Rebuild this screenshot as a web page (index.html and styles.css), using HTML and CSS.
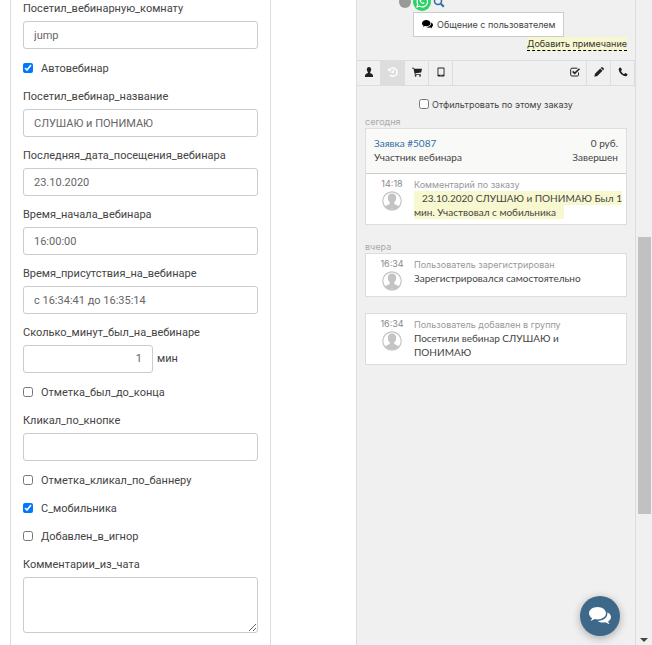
FILE: index.html
```
<!DOCTYPE html>
<html lang="ru">
<head>
    <meta charset="UTF-8">
    <title>Заявка #5087</title>
    <link rel="stylesheet" href="styles.css">
</head>
<body>
    <main class="content">
        <form class="fields">
            <label class="title" for="room">Посетил_вебинарную_комнату</label>
            <input class="text" type="text" id="room" value="jump">

            <label class="check"><input type="checkbox" checked>Автовебинар</label>

            <label class="title" for="webinar">Посетил_вебинар_название</label>
            <input class="text" type="text" id="webinar" value="СЛУШАЮ и ПОНИМАЮ">

            <label class="title" for="date">Последняя_дата_посещения_вебинара</label>
            <input class="text" type="text" id="date" value="23.10.2020">

            <label class="title" for="start">Время_начала_вебинара</label>
            <input class="text" type="text" id="start" value="16:00:00">

            <label class="title" for="presence">Время_присутствия_на_вебинаре</label>
            <input class="text" type="text" id="presence" value="с 16:34:41 до 16:35:14">

            <label class="title" for="minutes">Сколько_минут_был_на_вебинаре</label>
            <div class="minutes">
                <input class="text number" type="text" id="minutes" value="1">
                <span>мин</span>
            </div>

            <label class="check"><input type="checkbox">Отметка_был_до_конца</label>

            <label class="title" for="button">Кликал_по_кнопке</label>
            <input class="text" type="text" id="button">

            <label class="check"><input type="checkbox">Отметка_кликал_по_баннеру</label>
            <label class="check"><input type="checkbox" checked>С_мобильника</label>
            <label class="check"><input type="checkbox">Добавлен_в_игнор</label>

            <label class="title" for="comments">Комментарии_из_чата</label>
            <textarea class="text area" id="comments"></textarea>
        </form>
    </main>

    <!-- общие иконки -->
    <svg class="sprite" width="0" height="0">
        <symbol id="comments-icon" viewBox="0 0 22 18">
            <path d="M8.500 0C3.800 0 0 2.800 0 6.300c0 2 1.200 3.700 3.100 4.900-.3 1-.9 1.800-1.700 2.500 1.700-.1 3.200-.7 4.400-1.600.9.2 1.800.3 2.700.3 4.700 0 8.500-2.700 8.500-6.100S13.200 0 8.500 0z"/>
            <path d="M18.300 5.200c.1.400.1.800.1 1.200 0 4.100-4.300 7.400-9.700 7.500 1.400 1 3.300 1.600 5.400 1.600.8 0 1.600-.1 2.300-.3 1.200.9 2.600 1.500 4.200 1.600-.7-.7-1.200-1.400-1.500-2.300 1.800-1.100 2.900-2.700 2.900-4.500 0-1.900-1.400-3.700-3.700-4.800z"/>
        </symbol>
        <symbol id="avatar-icon" viewBox="0 0 20 20">
            <circle cx="10" cy="10" r="9.200" fill="#fff" stroke="#c4c4c4" stroke-width="1.200"/>
            <path fill="#c4c4c4" d="M10 2.500c-2.800 0-4.200 1.700-4.200 4.200 0 2 .8 3.500 1.900 4.500v1.500c0 .9-3.400 1.200-4.700 2.700C4.700 17.600 7 18.700 10 18.700s5.300-1.100 7-3.300c-1.300-1.500-4.700-1.800-4.700-2.700v-1.500c1.100-1 1.900-2.500 1.900-4.500 0-2.500-1.400-4.200-4.200-4.200z"/>
        </symbol>
    </svg>

    <aside class="panel">
        <div class="contacts">
            <span class="dot"></span>
            <svg class="whatsapp" width="18" height="18" viewBox="0 0 18 18">
                <circle cx="9" cy="9" r="9" fill="#2bd366"/>
                <path d="M4 14l.8-2.800A5.200 5.200 0 1 1 6.800 13.200z" fill="none" stroke="#fff" stroke-width="1.200"/>
                <path d="M7 6.200c-.9.900-.3 2.300.9 3.500s2.700 1.800 3.500.9l.2-.7-1.400-.7-.7.600c-.8-.3-1.400-.9-1.700-1.700l.6-.7-.7-1.400z" fill="#fff"/>
            </svg>
            <svg class="search" width="12" height="12" viewBox="0 0 12 12" fill="none" stroke="#2e6da4">
                <circle cx="5" cy="5" r="3.500" stroke-width="1.500"/>
                <path d="M7.800 7.800l3 3" stroke-width="2"/>
            </svg>
        </div>
        <button class="talk" type="button">
            <svg width="11" height="9"><use href="#comments-icon"/></svg>
            Общение с пользователем
        </button>
        <div class="note"><a href="#">Добавить примечание</a></div>

        <div class="toolbar">
            <button type="button" aria-label="Пользователь">
                <svg width="10" height="10" viewBox="0 0 10 10"><path d="M5 0C3.600 0 2.800 1 2.800 2.500c0 1.100.4 2 1.100 2.600v.7C3.600 6.400 1 6.700 1 8.600V10h8V8.600c0-1.900-2.600-2.200-2.900-2.800v-.7c.7-.6 1.100-1.500 1.100-2.600C7.200 1 6.400 0 5 0z"/></svg>
            </button>
            <button class="active" type="button" aria-label="История">
                <svg width="10" height="10" viewBox="0 0 10 10" fill="none" stroke="#fff" stroke-width="1.400"><path d="M1.500 3A4.100 4.100 0 1 1 2 7.900M5.200 2.700v2.700H3.300"/><path d="M.2.800v3.500h3.500z" fill="#fff" stroke="none"/></svg>
            </button>
            <button type="button" aria-label="Корзина">
                <svg width="10" height="10" viewBox="0 0 10 10"><path d="M0 .7h2l.4 1H10L9.200 5.600 3.500 6.300l.1.600h5.200v.8H2.800L1.500 1.600H0z"/><circle cx="3.600" cy="8.800" r=".9"/><circle cx="8" cy="8.800" r=".9"/></svg>
            </button>
            <button type="button" aria-label="Планшет">
                <svg width="10" height="10" viewBox="0 0 10 10"><path fill-rule="evenodd" d="M2.300.5h5.400q.8 0 .8.800v7.400q0 .8-.8.800H2.300q-.8 0-.8-.8V1.300q0-.8.800-.8zM2.400 1.400v6.300h5.200V1.400zM4.600 8.200v.7h.8v-.7z"/></svg>
            </button>
            <span class="space"></span>
            <button type="button" aria-label="Задача">
                <svg width="10" height="10" viewBox="0 0 10 10" fill="none" stroke="#222"><path d="M8.500 5.500v2.400q0 1.100-1.100 1.100H1.900Q.7 9 .7 7.900V2.400q0-1.200 1.200-1.200h5.400"/><path d="M2.700 4.400l2 2 4.800-4.700" stroke-width="1.600"/></svg>
            </button>
            <button type="button" aria-label="Изменить">
                <svg width="10" height="10" viewBox="0 0 10 10"><path d="M.3 9.700l.7-3L6.200 1.500l2.300 2.300L3.300 9zM6.800.9l.7-.7q.5-.4 1 0l1.300 1.300q.4.500 0 1l-.7.700z"/></svg>
            </button>
            <button type="button" aria-label="Позвонить">
                <svg width="10" height="10" viewBox="0 0 10 10"><path d="M2.300.5L.9 1.300C.2 3.200 1.500 5.500 3 7s3.800 2.800 5.700 2.100l.8-1.400-.2-.6-2-1.100-1.200 1C5 6.600 3.600 5.200 3 3.900l1-1.200-1.100-2z"/></svg>
            </button>
        </div>

        <label class="filter"><input type="checkbox">Отфильтровать по этому заказу</label>

        <h2 class="day">сегодня</h2>
        <section class="card">
            <header class="order">
                <a href="#">Заявка #5087</a><span>0 руб.</span>
                <span>Участник вебинара</span><span>Завершен</span>
            </header>
            <div class="event">
                <div class="who">
                    <time>14:18</time>
                    <svg width="20" height="20"><use href="#avatar-icon"/></svg>
                </div>
                <div class="what">
                    <h3>Комментарий по заказу</h3>
                    <p><mark>23.10.2020 СЛУШАЮ и ПОНИМАЮ Был 1<br>мин. Участвовал с мобильника</mark></p>
                </div>
            </div>
        </section>

        <h2 class="day">вчера</h2>
        <section class="card">
            <div class="event">
                <div class="who">
                    <time>16:34</time>
                    <svg width="20" height="20"><use href="#avatar-icon"/></svg>
                </div>
                <div class="what">
                    <h3>Пользователь зарегистрирован</h3>
                    <p>Зарегистрировался самостоятельно</p>
                </div>
            </div>
        </section>
        <section class="card">
            <div class="event">
                <div class="who">
                    <time>16:34</time>
                    <svg width="20" height="20"><use href="#avatar-icon"/></svg>
                </div>
                <div class="what">
                    <h3>Пользователь добавлен в группу</h3>
                    <p>Посетили вебинар СЛУШАЮ и<br>ПОНИМАЮ</p>
                </div>
            </div>
        </section>
    </aside>

    <div class="scroll">
        <span class="thumb"></span>
        <span class="down"></span>
    </div>

    <button class="chat" type="button" aria-label="Чат">
        <svg width="22" height="18"><use href="#comments-icon"/></svg>
    </button>
</body>
</html>
```
FILE: styles.css
```
*{
    box-sizing: border-box;
    margin: 0;
    padding: 0;
}

body{
    display: flex;
    height: 100vh;
    overflow: hidden;
    background: #fff;
    color: #444;
    font-family: Roboto, "Liberation Sans", sans-serif;
    font-size: 11px;
}

button, input, textarea{
    font: inherit;
    color: inherit;
}

a{
    color: #2e6da4;
    text-decoration: none;
}

.sprite{
    position: absolute;
}

/* левая часть: поля */

.content{
    flex: 1;
    padding: 0 85px 0 10px;
}

.fields{
    display: flex;
    flex-direction: column;
    min-height: 100%;
    padding: 0 12px;
    border: solid #ddd;
    border-width: 0 1px;
}

.title{
    height: 18px;
    margin-bottom: 3px;
    line-height: 18px;
}

.text{
    width: 100%;
    height: 28px;
    margin-bottom: 10px;
    padding: 0 10px;
    border: 1px solid #ccc;
    border-radius: 3px;
    background: #fff;
    color: #666;
}

.check{
    display: flex;
    align-items: center;
    gap: 8px;
    height: 18px;
    margin-bottom: 10px;
}

.check + .title{
    margin-top: 1px;
}

.check input, .filter input{
    width: 10px;
    height: 10px;
}

.minutes{
    display: flex;
    gap: 4px;
    line-height: 28px;
}

.number{
    width: 130px;
    text-align: right;
}

.area{
    height: 56px;
    resize: vertical;
}

/* правая часть: пользователь и события */

.panel{
    width: 280px;
    background: #f0f0f0;
    border: solid #ddd;
    border-width: 0 1px;
    font-family: Lato, "Liberation Sans", sans-serif;
    font-size: 10px;
}

.contacts{
    display: flex;
    align-items: center;
    gap: 2px;
    height: 18px;
    margin: -7px 0 0 42px;
}

.dot{
    width: 12px;
    height: 12px;
    border-radius: 50%;
    background: #999;
}

.talk, .note, .filter, .day, .who, .what h3{
    font-family: Inter, "Liberation Sans", sans-serif;
    font-size: 9px;
    font-weight: normal;
}

.talk{
    display: flex;
    align-items: center;
    gap: 4px;
    height: 25px;
    margin: 1px 0 0 56px;
    padding: 0 7px 0 8px;
    background: #fff;
    border: 1px solid #ccc;
}

.note{
    padding: 0 8px 0 0;
    text-align: right;
    line-height: 14px;
}

.note a{
    display: inline-block;
    height: 14px;
    background: #f8f8d0;
    border-bottom: 1px dashed #000;
    color: #333;
}

.toolbar{
    display: flex;
    height: 26px;
    margin-top: 9px;
    border: solid #ddd;
    border-width: 1px 0;
}

.toolbar button{
    display: flex;
    align-items: center;
    justify-content: center;
    width: 24px;
    padding-bottom: 2px;
    border: 0;
    border-right: 1px solid #ddd;
    background: none;
    fill: #222;
}

.toolbar .active{
    background: #ddd;
}

.space{
    flex: 1;
}

.filter{
    display: flex;
    align-items: center;
    justify-content: center;
    gap: 3px;
    height: 14px;
    margin-top: 11px;
}

.day{
    margin: 5px 8px 0;
    color: #aaa;
    line-height: 12px;
}

.card{
    margin: 0 8px 16px;
    background: #fff;
    border: 1px solid #ddd;
}

.order{
    display: grid;
    grid-template-columns: 1fr auto;
    padding: 7px 8px 9px;
    background: #f9f9f7;
    border-bottom: 1px solid #ccc;
    line-height: 14px;
}

.order span:nth-child(even){
    text-align: right;
}

.event{
    display: flex;
    gap: 11px;
    padding: 4px 4px 5px 15px;
}

.who{
    display: flex;
    flex-direction: column;
    align-items: center;
    gap: 1px;
    width: 22px;
    color: #888;
    line-height: 12px;
}

.what{
    flex: 1;
    line-height: 14px;
}

.what h3{
    color: #999;
    line-height: 13px;
}

mark{
    padding: 1px 8px;
    background: #f8f8d0;
    color: inherit;
}

/* полоса прокрутки */

.scroll{
    display: flex;
    flex-direction: column;
    align-items: center;
    justify-content: space-between;
    width: 16px;
    padding: 237px 0 3px;
    background: #f0f0f0;
}

.thumb{
    width: 13px;
    height: 43vh;
    background: #c1c1c1;
}

.down{
    border: 4px solid transparent;
    border-top-color: #444;
    border-bottom: 0;
}

.chat{
    position: fixed;
    right: 32px;
    bottom: 9px;
    display: flex;
    align-items: center;
    justify-content: center;
    width: 40px;
    height: 40px;
    border: 0;
    border-radius: 50%;
    background: #3d6889;
    box-shadow: 0 2px 8px rgba(0, 0, 0, .3);
    fill: #fff;
}
```
